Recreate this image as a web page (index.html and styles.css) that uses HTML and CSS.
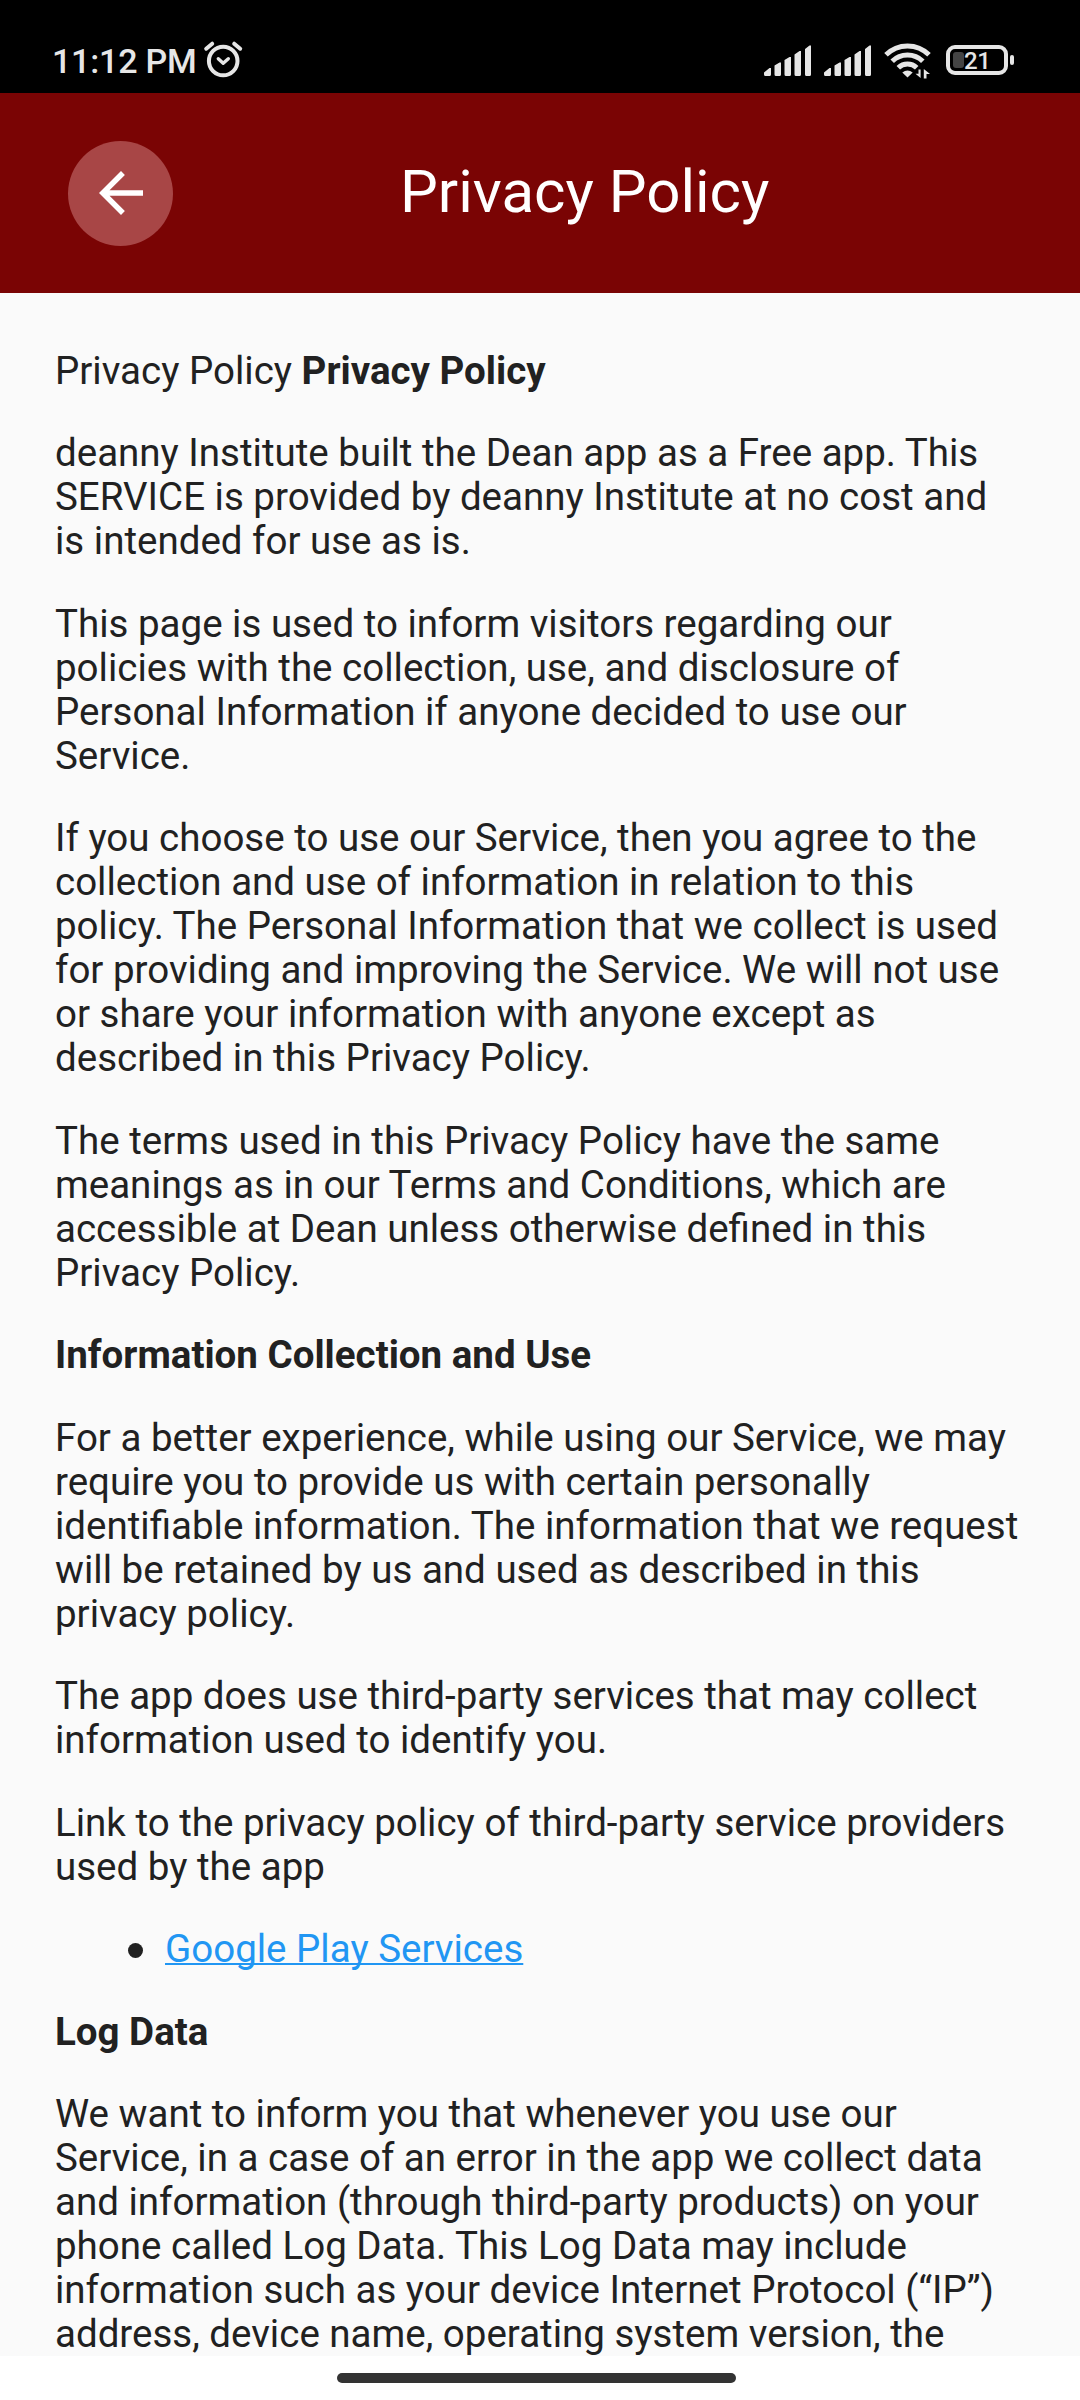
FILE: index.html
```html
<!DOCTYPE html>
<html lang="en">
<head>
<meta charset="utf-8">
<title>Privacy Policy</title>
<link rel="stylesheet" href="styles.css">
</head>
<body>
<div class="screen">
  <div class="status-bar">
    <span class="clock">11:12 PM</span>
    <svg class="alarm" width="42" height="40" viewBox="0 0 42 40" fill="none" stroke="#e6e6e6" stroke-linecap="round">
      <circle cx="20.2" cy="22" r="14.3" stroke-width="4"/>
      <path d="M3.200 9.700L9.200 4.700M37.200 9.700L31.200 4.700" stroke-width="4"/>
      <path d="M15.300 19.700L20.200 24.200L25.300 19.700" stroke-width="3.400" stroke-linejoin="round"/>
    </svg>
    <span class="spacer"></span>
    <svg class="signal" width="48" height="32" viewBox="0 0 48 32" fill="#e6e6e6">
      <path d="M0 27.500L5.500 23H7V29.500Q7 31 5.500 31H1.500Q0 31 0 29.500ZM10.500 20.500L15.500 17.500H17V29.500Q17 31 15.500 31H12Q10.500 31 10.500 29.500ZM20.500 15L25.500 12H27V29.500Q27 31 25.500 31H22Q20.500 31 20.500 29.500ZM30.500 9.500L35.500 6H37V29.500Q37 31 35.500 31H32Q30.500 31 30.500 29.500ZM41 4L45.500 .5H47V29.500Q47 31 45.500 31H42.500Q41 31 41 29.500Z"/>
    </svg>
    <svg class="signal signal-second" width="48" height="32" viewBox="0 0 48 32" fill="#e6e6e6">
      <path d="M0 27.500L5.500 23H7V29.500Q7 31 5.500 31H1.500Q0 31 0 29.500ZM10.500 20.500L15.500 17.500H17V29.500Q17 31 15.500 31H12Q10.500 31 10.500 29.500ZM20.500 15L25.500 12H27V29.500Q27 31 25.500 31H22Q20.500 31 20.500 29.500ZM30.500 9.500L35.500 6H37V29.500Q37 31 35.500 31H32Q30.500 31 30.500 29.500ZM41 4L45.500 .5H47V29.500Q47 31 45.500 31H42.500Q41 31 41 29.500Z"/>
    </svg>
    <svg class="wifi" width="48" height="36" viewBox="0 0 48 36" fill="none" stroke="#e6e6e6">
      <path d="M2 11.800A30.500 30.500 0 0 1 45 11.800M8.200 18.300A21.800 21.800 0 0 1 38.800 18.300M14.300 24.800A13.200 13.200 0 0 1 32.700 24.800" stroke-width="5"/>
      <path d="M18.300 29.500Q23.500 25.500 28.700 29.500L23.500 34.500Z" fill="#e6e6e6" stroke="none"/>
      <path d="M36.600 26.500V35L31.500 30.800H34.500V26.500ZM39.800 35.500V26L46 31H42.500V35.500Z" fill="#e6e6e6" stroke="none"/>
    </svg>
    <div class="battery">
      <div class="battery-body"><span class="battery-level"></span><span class="battery-text">21</span></div>
      <span class="battery-tip"></span>
    </div>
  </div>
  <header class="app-bar">
    <div class="back">
      <svg width="66" height="66" viewBox="0 0 24 24" fill="#fff"><path d="M20 11H7.830l5.590-5.590L12 4l-8 8 8 8 1.410-1.410L7.830 13H20v-2z"/></svg>
    </div>
    <h1 class="title">Privacy Policy</h1>
  </header>
  <main class="policy">
    <p>Privacy Policy <strong>Privacy Policy</strong></p>
    <p>deanny Institute built the Dean app as a Free app. This SERVICE is provided by deanny Institute at no cost and is intended for use as is.</p>
    <p>This page is used to inform visitors regarding our policies with the collection, use, and disclosure of Personal Information if anyone decided to use our Service.</p>
    <p>If you choose to use our Service, then you agree to the collection and use of information in relation to this policy. The Personal Information that we collect is used for providing and improving the Service. We will not use or share your information with anyone except as described in this Privacy Policy.</p>
    <p>The terms used in this Privacy Policy have the same meanings as in our Terms and Conditions, which are accessible at Dean unless otherwise defined in this Privacy Policy.</p>
    <p><strong>Information Collection and Use</strong></p>
    <p>For a better experience, while using our Service, we may require you to provide us with certain personally identifiable information. The information that we request will be retained by us and used as described in this privacy policy.</p>
    <p>The app does use third-party services that may collect information used to identify you.</p>
    <p>Link to the privacy policy of third-party service providers used by the app</p>
    <ul class="links"><li><a class="link" href="#">Google Play Services</a></li></ul>
    <p><strong>Log Data</strong></p>
    <p class="last">We want to inform you that whenever you use our Service, in a case of an error in the app we collect data and information (through third-party products) on your phone called Log Data. This Log Data may include information such as your device Internet Protocol (“IP”) address, device name, operating system version, the</p>
  </main>
  <footer class="nav-bar"><span class="handle"></span></footer>
</div>
</body>
</html>
```
FILE: styles.css
```css
* { box-sizing: border-box; }
body { margin: 0; background: #fff; font-family: Roboto, sans-serif; }
.screen { width: 1080px; height: 2400px; display: flex; flex-direction: column; overflow: hidden; }

.status-bar { height: 93px; flex: none; background: #000; color: #e6e6e6; display: flex; align-items: flex-start; padding: 0 66px 0 52px; }
.clock { font-size: 34px; font-weight: 500; line-height: 40px; letter-spacing: -0.2px; margin-top: 41px; width: 151px; white-space: nowrap; }
.alarm { margin-top: 39px; }
.spacer { flex: 1; }
.signal { margin-top: 45px; }
.signal-second { margin-left: 12px; }
.wifi { margin: 43px 0 0 12px; }
.battery { display: flex; align-items: center; gap: 2px; margin: 45px 0 0 14px; }
.battery-body { width: 62px; height: 30px; border: 4px solid #e6e6e6; border-radius: 9px; display: flex; align-items: center; padding-left: 3px; }
.battery-level { width: 11px; height: 16px; border-radius: 3px; background: #444; }
.battery-text { font-size: 24px; line-height: 22px; font-weight: 500; letter-spacing: -0.5px; padding-top: 2px; }
.battery-tip { width: 4px; height: 10px; border-radius: 2px; background: #e6e6e6; }

.app-bar { height: 200px; flex: none; background: #7a0404; display: flex; align-items: center; padding-left: 68px; }
.back { width: 105px; height: 105px; border-radius: 50%; background: #a84646; display: flex; align-items: center; justify-content: center; }
.title { margin: 0 0 3px 227px; color: #fff; font-size: 60px; font-weight: 400; line-height: 70px; white-space: nowrap; }

.policy { height: 2063px; flex: none; background: #fafafa; color: #212121; padding: 55.9px 55px 0; font-size: 38.5px; line-height: 44px; }
.policy p { margin: 0 0 38.5px; }
.policy .last { margin-bottom: 0; }
.links { list-style: none; margin: 0 0 38.5px; padding: 0 0 0 73px; }
.links li { display: flex; align-items: center; gap: 22px; }
.links li::before { content: ""; width: 15px; height: 15px; margin-top: 2px; border-radius: 50%; background: #212121; }
.link { color: #2196f3; text-decoration: underline; text-decoration-thickness: 2px; text-underline-offset: 1px; text-decoration-skip-ink: none; }

.nav-bar { flex: 1; background: #fff; display: flex; justify-content: center; align-items: flex-start; padding-top: 17px; }
.handle { width: 399px; height: 10px; border-radius: 5px; background: #333; margin-right: 7px; }
```
